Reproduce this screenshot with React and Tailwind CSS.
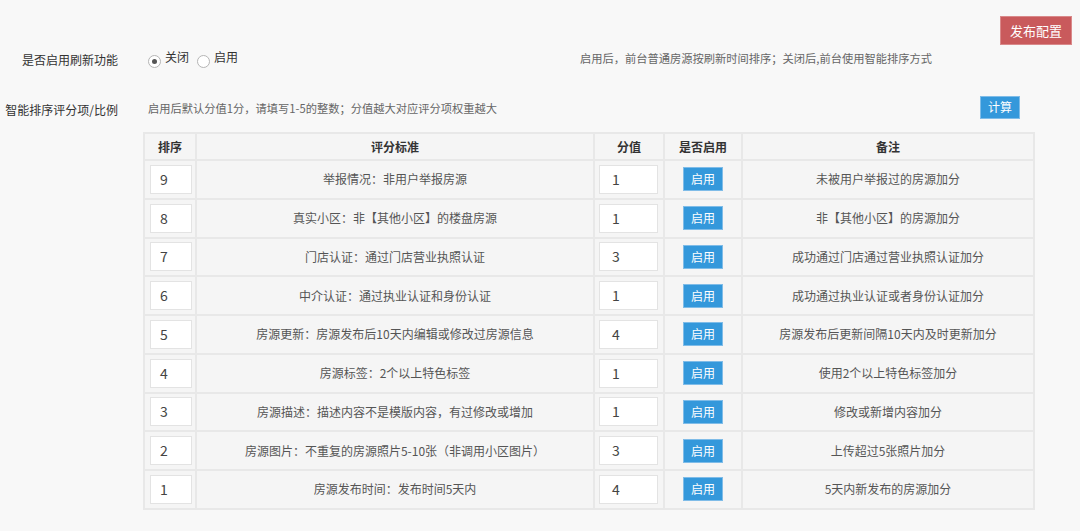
import React from 'react'

const rows = [
  { order: 9, rule: '举报情况：非用户举报房源', score: 1, note: '未被用户举报过的房源加分' },
  { order: 8, rule: '真实小区：非【其他小区】的楼盘房源', score: 1, note: '非【其他小区】的房源加分' },
  { order: 7, rule: '门店认证：通过门店营业执照认证', score: 3, note: '成功通过门店通过营业执照认证加分' },
  { order: 6, rule: '中介认证：通过执业认证和身份认证', score: 1, note: '成功通过执业认证或者身份认证加分' },
  { order: 5, rule: '房源更新：房源发布后10天内编辑或修改过房源信息', score: 4, note: '房源发布后更新间隔10天内及时更新加分' },
  { order: 4, rule: '房源标签：2个以上特色标签', score: 1, note: '使用2个以上特色标签加分' },
  { order: 3, rule: '房源描述：描述内容不是模版内容，有过修改或增加', score: 1, note: '修改或新增内容加分' },
  { order: 2, rule: '房源图片：不重复的房源照片5-10张（非调用小区图片）', score: 3, note: '上传超过5张照片加分' },
  { order: 1, rule: '房源发布时间：发布时间5天内', score: 4, note: '5天内新发布的房源加分' },
]

const Radio = ({ checked, label }) => (
  <label className="flex items-center gap-[4px]">
    <span className="mt-[6px] w-[13px] h-[13px] rounded-full border border-[#b5b5b5] bg-white flex items-center justify-center">
      {checked && <span className="w-[5px] h-[5px] rounded-full bg-[#555]" />}
    </span>
    <span className="text-[12px] text-[#333] -mt-[2px]">{label}</span>
  </label>
)

export default function App() {
  return (
    <div
      className="w-[1080px] h-[531px] bg-[#f8f8f8] overflow-hidden text-[#555]"
      style={{ fontFamily: '"Noto Sans CJK SC", "Noto Sans", sans-serif' }}
    >
      <div className="flex justify-end pt-[16px] pr-[8px]">
        <button className="w-[72px] h-[29px] bg-[#c95a5c] border border-[#d9898a] text-white text-[13px]">
          发布配置
        </button>
      </div>

      <div className="flex items-center h-[20px] mt-[3px]">
        <div className="w-[118px] text-right text-[12px] text-[#333] mt-[4px]">是否启用刷新功能</div>
        <div className="ml-[30px] flex items-center gap-[8px] w-[432px]">
          <Radio checked label="关闭" />
          <Radio label="启用" />
        </div>
        <div className="text-[11.25px] text-[#666]">启用后，前台普通房源按刷新时间排序；关闭后,前台使用智能排序方式</div>
      </div>

      <div className="flex items-center h-[24px] mt-[27px]">
        <div className="w-[118px] text-right text-[12px] text-[#333] mt-[6px] whitespace-nowrap">智能排序评分项/比例</div>
        <div className="ml-[30px] w-[832px] text-[11.25px] text-[#666] mt-[2px]">
          启用后默认分值1分，请填写1-5的整数；分值越大对应评分项权重越大
        </div>
        <button className="w-[40px] h-[23px] bg-[#3498db] border border-[#7fbce8] text-white text-[12px]">
          计算
        </button>
      </div>

      <div className="ml-[143px] mt-[13px] w-[890px]">
        <table className="w-full table-fixed border-collapse bg-[#f5f5f5] text-[12px]">
          <colgroup>
            <col className="w-[52px]" />
            <col className="w-[398px]" />
            <col className="w-[70px]" />
            <col className="w-[78px]" />
            <col className="w-[292px]" />
          </colgroup>
          <thead>
            <tr className="h-[27px]">
              {['排序', '评分标准', '分值', '是否启用', '备注'].map((h) => (
                <th key={h} className="border-2 border-[#e8e8e8] font-bold text-[#333] text-center">
                  {h}
                </th>
              ))}
            </tr>
          </thead>
          <tbody>
            {rows.map((r) => (
              <tr key={r.order} className="h-[38.75px]">
                <td className="border-2 border-[#e8e8e8] px-[5px]">
                  <div className="w-[42px] h-[29px] bg-white border border-[#e3e3e3] flex items-center pl-[9px] text-[14px] text-[#444]">
                    {r.order}
                  </div>
                </td>
                <td className="border-2 border-[#e8e8e8] text-center text-[#555]">{r.rule}</td>
                <td className="border-2 border-[#e8e8e8] px-[4px]">
                  <div className="w-[59px] h-[29px] bg-white border border-[#e3e3e3] flex items-center pl-[12px] text-[14px] text-[#444]">
                    {r.score}
                  </div>
                </td>
                <td className="border-2 border-[#e8e8e8] text-center">
                  <button className="w-[40px] h-[24px] bg-[#3498db] border border-[#7fbce8] text-white text-[12px]">
                    启用
                  </button>
                </td>
                <td className="border-2 border-[#e8e8e8] text-center text-[#555]">{r.note}</td>
              </tr>
            ))}
          </tbody>
        </table>
      </div>
    </div>
  )
}
